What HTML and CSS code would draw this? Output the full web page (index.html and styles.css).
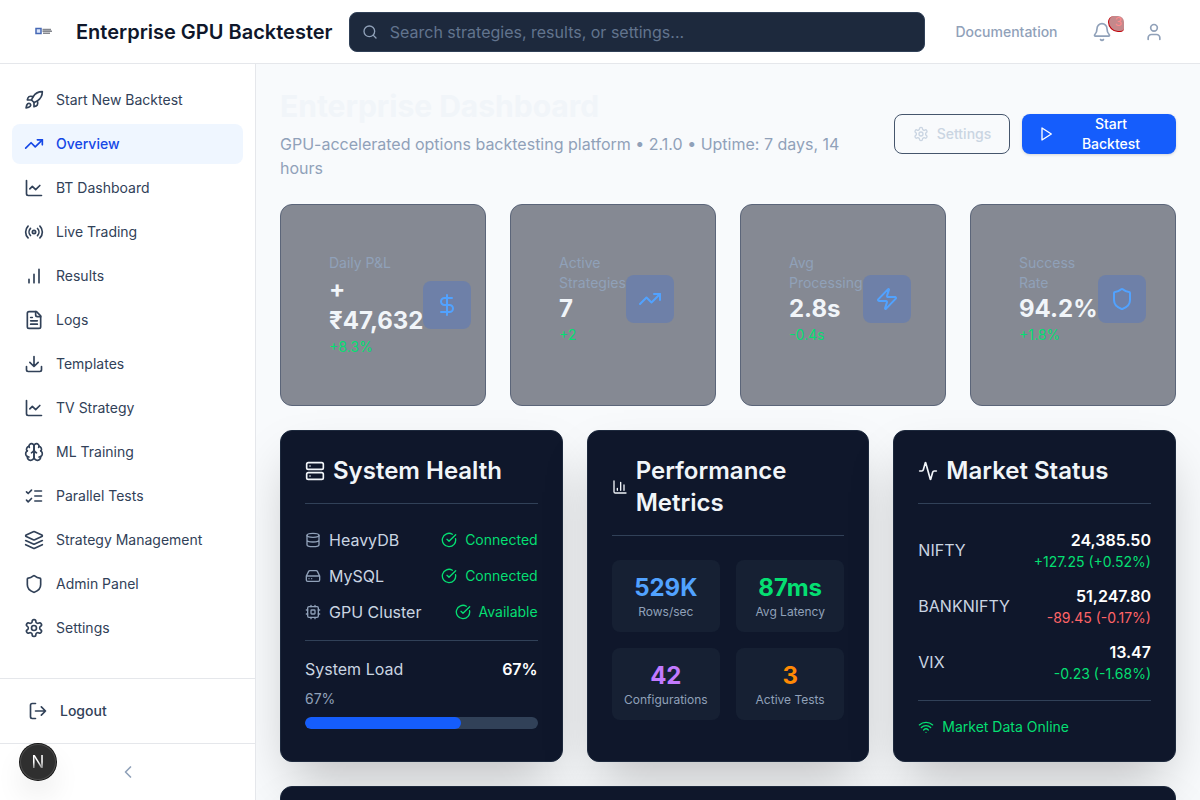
FILE: index.html
```html
<!DOCTYPE html>
<html lang="en">
<head>
<meta charset="utf-8">
<meta name="viewport" content="width=device-width, initial-scale=1">
<title>Enterprise GPU Backtester</title>
<link rel="stylesheet" href="styles.css">
</head>
<body>
<svg class="sprite" aria-hidden="true">
  <symbol id="rocket" viewBox="0 0 24 24"><path d="M4.5 16.5c-1.5 1.26-2 5-2 5s3.74-.5 5-2c.71-.84.7-2.13-.09-2.91a2.18 2.18 0 0 0-2.91-.09z"/><path d="m12 15-3-3a22 22 0 0 1 2-3.95A12.88 12.88 0 0 1 22 2c0 2.72-.78 7.5-6 11a22.35 22.35 0 0 1-4 2z"/><path d="M9 12H4s.55-3.03 2-4c1.62-1.08 5 0 5 0"/><path d="M12 15v5s3.03-.55 4-2c1.08-1.62 0-5 0-5"/></symbol>
  <symbol id="trend" viewBox="0 0 24 24"><path d="M22 7 13.5 15.5 8.5 10.5 2 17"/><path d="M16 7h6v6"/></symbol>
  <symbol id="chart-line" viewBox="0 0 24 24"><path d="M3 3v16a2 2 0 0 0 2 2h16"/><path d="m19 9-5 5-4-4-3 3"/></symbol>
  <symbol id="radio" viewBox="0 0 24 24"><path d="M4.9 19.1C1 15.2 1 8.8 4.9 4.9"/><path d="M7.8 16.2c-2.3-2.3-2.3-6.1 0-8.5"/><circle cx="12" cy="12" r="2"/><path d="M16.2 7.8c2.3 2.3 2.3 6.1 0 8.5"/><path d="M19.1 4.9C23 8.8 23 15.1 19.1 19"/></symbol>
  <symbol id="bars" viewBox="0 0 24 24"><path d="M12 20V10M18 20V4M6 20v-4"/></symbol>
  <symbol id="file" viewBox="0 0 24 24"><path d="M15 2H6a2 2 0 0 0-2 2v16a2 2 0 0 0 2 2h12a2 2 0 0 0 2-2V7Z"/><path d="M14 2v4a2 2 0 0 0 2 2h4M10 9H8M16 13H8M16 17H8"/></symbol>
  <symbol id="download" viewBox="0 0 24 24"><path d="M21 15v4a2 2 0 0 1-2 2H5a2 2 0 0 1-2-2v-4M7 10l5 5 5-5M12 15V3"/></symbol>
  <symbol id="brain" viewBox="0 0 24 24"><path d="M12 5a3 3 0 1 0-5.997.125 4 4 0 0 0-2.526 5.77 4 4 0 0 0 .556 6.588A4 4 0 1 0 12 18Z"/><path d="M12 5a3 3 0 1 1 5.997.125 4 4 0 0 1 2.526 5.77 4 4 0 0 1-.556 6.588A4 4 0 1 1 12 18Z"/><path d="M15 13a4.5 4.5 0 0 1-3-4 4.5 4.5 0 0 1-3 4M17.599 6.5a3 3 0 0 0 .399-1.375M6.003 5.125A3 3 0 0 0 6.401 6.5M3.477 10.896a4 4 0 0 1 .585-.396M19.938 10.5a4 4 0 0 1 .585.396M6 18a4 4 0 0 1-1.967-.516M19.967 17.484A4 4 0 0 1 18 18"/></symbol>
  <symbol id="checks" viewBox="0 0 24 24"><path d="m3 17 2 2 4-4M3 7l2 2 4-4M13 6h8M13 12h8M13 18h8"/></symbol>
  <symbol id="layers" viewBox="0 0 24 24"><path d="m12.83 2.18a2 2 0 0 0-1.66 0L2.6 6.08a1 1 0 0 0 0 1.83l8.58 3.91a2 2 0 0 0 1.66 0l8.58-3.9a1 1 0 0 0 0-1.83Z"/><path d="m22 17.65-9.17 4.16a2 2 0 0 1-1.66 0L2 17.65M22 12.65l-9.17 4.16a2 2 0 0 1-1.66 0L2 12.65"/></symbol>
  <symbol id="shield" viewBox="0 0 24 24"><path d="M20 13c0 5-3.5 7.5-7.66 8.95a1 1 0 0 1-.67-.01C7.5 20.5 4 18 4 13V6a1 1 0 0 1 1-1c2 0 4.5-1.2 6.24-2.72a1.17 1.17 0 0 1 1.52 0C14.51 3.81 17 5 19 5a1 1 0 0 1 1 1z"/></symbol>
  <symbol id="gear" viewBox="0 0 24 24"><path d="M12.22 2h-.44a2 2 0 0 0-2 2v.18a2 2 0 0 1-1 1.73l-.43.25a2 2 0 0 1-2 0l-.15-.08a2 2 0 0 0-2.73.73l-.22.38a2 2 0 0 0 .73 2.73l.15.1a2 2 0 0 1 1 1.72v.51a2 2 0 0 1-1 1.74l-.15.09a2 2 0 0 0-.73 2.73l.22.38a2 2 0 0 0 2.73.73l.15-.08a2 2 0 0 1 2 0l.43.25a2 2 0 0 1 1 1.73V20a2 2 0 0 0 2 2h.44a2 2 0 0 0 2-2v-.18a2 2 0 0 1 1-1.73l.43-.25a2 2 0 0 1 2 0l.15.08a2 2 0 0 0 2.73-.73l.22-.39a2 2 0 0 0-.73-2.73l-.15-.08a2 2 0 0 1-1-1.74v-.5a2 2 0 0 1 1-1.74l.15-.09a2 2 0 0 0 .73-2.73l-.22-.38a2 2 0 0 0-2.73-.73l-.15.08a2 2 0 0 1-2 0l-.43-.25a2 2 0 0 1-1-1.73V4a2 2 0 0 0-2-2z"/><circle cx="12" cy="12" r="3"/></symbol>
  <symbol id="logout" viewBox="0 0 24 24"><path d="M9 21H5a2 2 0 0 1-2-2V5a2 2 0 0 1 2-2h4M16 17l5-5-5-5M21 12H9"/></symbol>
  <symbol id="left" viewBox="0 0 24 24"><path d="m15 18-6-6 6-6"/></symbol>
  <symbol id="search" viewBox="0 0 24 24"><circle cx="11" cy="11" r="8"/><path d="m21 21-4.3-4.3"/></symbol>
  <symbol id="bell" viewBox="0 0 24 24"><path d="M10.268 21a2 2 0 0 0 3.464 0M3.262 15.326A1 1 0 0 0 4 17h16a1 1 0 0 0 .74-1.673C19.41 13.956 18 12.499 18 8A6 6 0 0 0 6 8c0 4.499-1.411 5.956-2.738 7.326"/></symbol>
  <symbol id="user" viewBox="0 0 24 24"><path d="M19 21v-2a4 4 0 0 0-4-4H9a4 4 0 0 0-4 4v2"/><circle cx="12" cy="7" r="4"/></symbol>
  <symbol id="play" viewBox="0 0 24 24"><path d="m6 3 14 9-14 9V3z"/></symbol>
  <symbol id="dollar" viewBox="0 0 24 24"><path d="M12 2v20M17 5H9.500a3.500 3.500 0 0 0 0 7h5a3.500 3.500 0 0 1 0 7H6"/></symbol>
  <symbol id="zap" viewBox="0 0 24 24"><path d="M4 14a1 1 0 0 1-.78-1.63l9.900-10.200a.5.5 0 0 1 .86.46l-1.920 6.020A1 1 0 0 0 13 10h7a1 1 0 0 1 .78 1.630l-9.900 10.200a.5.5 0 0 1-.86-.46l1.920-6.020A1 1 0 0 0 11 14z"/></symbol>
  <symbol id="server" viewBox="0 0 24 24"><rect width="20" height="8" x="2" y="2" rx="2"/><rect width="20" height="8" x="2" y="14" rx="2"/><path d="M6 6h.01M6 18h.01"/></symbol>
  <symbol id="chart-col" viewBox="0 0 24 24"><path d="M3 3v16a2 2 0 0 0 2 2h16M18 17V9M13 17V5M8 17v-3"/></symbol>
  <symbol id="activity" viewBox="0 0 24 24"><path d="M22 12h-2.480a2 2 0 0 0-1.930 1.460l-2.350 8.360a.25.25 0 0 1-.48 0L9.240 2.180a.25.25 0 0 0-.48 0l-2.350 8.360A2 2 0 0 1 4.490 12H2"/></symbol>
  <symbol id="database" viewBox="0 0 24 24"><ellipse cx="12" cy="5" rx="9" ry="3"/><path d="M3 5v14a9 3 0 0 0 18 0V5M3 12a9 3 0 0 0 18 0"/></symbol>
  <symbol id="drive" viewBox="0 0 24 24"><path d="M22 12H2M5.450 5.110 2 12v6a2 2 0 0 0 2 2h16a2 2 0 0 0 2-2v-6l-3.450-6.890A2 2 0 0 0 16.760 4H7.240a2 2 0 0 0-1.790 1.110zM6 16h.01M10 16h.01"/></symbol>
  <symbol id="cpu" viewBox="0 0 24 24"><rect width="16" height="16" x="4" y="4" rx="2"/><rect width="6" height="6" x="9" y="9" rx="1"/><path d="M15 2v2M15 20v2M2 15h2M2 9h2M20 15h2M20 9h2M9 2v2M9 20v2"/></symbol>
  <symbol id="ok" viewBox="0 0 24 24"><path d="M21.801 10A10 10 0 1 1 17 3.335M9 11l3 3L22 4"/></symbol>
  <symbol id="wifi" viewBox="0 0 24 24"><path d="M12 20h.01M2 8.820a15 15 0 0 1 20 0M5 12.859a10 10 0 0 1 14 0M8.500 16.429a5 5 0 0 1 7 0"/></symbol>
</svg>

<header class="topbar">
  <div class="brand">
    <svg class="logo" viewBox="0 0 40 32" aria-hidden="true"><rect x="12" y="12.500" width="5" height="5" fill="#dce6fa" stroke="#4668b5" stroke-width="1.500"/><path d="M18.500 13.500h8.500M18.500 15.300h9.500M19 17.200h7" fill="none" stroke="#85888f" stroke-width="1.500"/></svg>
    <span class="brand-name">Enterprise GPU Backtester</span>
  </div>
  <label class="search">
    <svg class="icon s16"><use href="#search"/></svg>
    <input type="search" placeholder="Search strategies, results, or settings..." aria-label="Search">
  </label>
  <div class="tools">
    <a class="docs" href="#">Documentation</a>
    <button class="tool" type="button" aria-label="Notifications"><svg class="icon s20"><use href="#bell"/></svg><span class="badge">3</span></button>
    <button class="tool" type="button" aria-label="Account"><svg class="icon s20"><use href="#user"/></svg></button>
  </div>
</header>

<div class="shell">
  <aside class="sidebar">
    <nav class="nav">
      <a href="#"><svg class="icon s20"><use href="#rocket"/></svg>Start New Backtest</a>
      <a href="#" class="active" aria-current="page"><svg class="icon s20"><use href="#trend"/></svg>Overview</a>
      <a href="#"><svg class="icon s20"><use href="#chart-line"/></svg>BT Dashboard</a>
      <a href="#"><svg class="icon s20"><use href="#radio"/></svg>Live Trading</a>
      <a href="#"><svg class="icon s20"><use href="#bars"/></svg>Results</a>
      <a href="#"><svg class="icon s20"><use href="#file"/></svg>Logs</a>
      <a href="#"><svg class="icon s20"><use href="#download"/></svg>Templates</a>
      <a href="#"><svg class="icon s20"><use href="#chart-line"/></svg>TV Strategy</a>
      <a href="#"><svg class="icon s20"><use href="#brain"/></svg>ML Training</a>
      <a href="#"><svg class="icon s20"><use href="#checks"/></svg>Parallel Tests</a>
      <a href="#"><svg class="icon s20"><use href="#layers"/></svg>Strategy Management</a>
      <a href="#"><svg class="icon s20"><use href="#shield"/></svg>Admin Panel</a>
      <a href="#"><svg class="icon s20"><use href="#gear"/></svg>Settings</a>
    </nav>
    <div class="side-foot"><button class="logout" type="button"><svg class="icon s20"><use href="#logout"/></svg>Logout</button></div>
    <div class="side-foot"><button class="collapse" type="button" aria-label="Collapse sidebar"><svg class="icon s20"><use href="#left"/></svg></button></div>
  </aside>

  <main class="main">
    <section class="page-head">
      <div>
        <h1>Enterprise Dashboard</h1>
        <p>GPU-accelerated options backtesting platform • 2.1.0 • Uptime: 7 days, 14 hours</p>
      </div>
      <div class="actions">
        <button class="btn outline" type="button"><svg class="icon s16"><use href="#gear"/></svg>Settings</button>
        <button class="btn primary" type="button"><svg class="icon s16"><use href="#play"/></svg><span>Start<br>Backtest</span></button>
      </div>
    </section>

    <section class="stats">
      <article class="stat"><div class="stat-row"><div><p class="stat-label">Daily P&amp;L</p><p class="stat-value">+<wbr>₹47,632</p><p class="stat-change">+8.3%</p></div><span class="stat-icon"><svg class="icon s24"><use href="#dollar"/></svg></span></div></article>
      <article class="stat"><div class="stat-row"><div><p class="stat-label">Active Strategies</p><p class="stat-value">7</p><p class="stat-change">+2</p></div><span class="stat-icon"><svg class="icon s24"><use href="#trend"/></svg></span></div></article>
      <article class="stat"><div class="stat-row"><div><p class="stat-label">Avg Processing</p><p class="stat-value">2.8s</p><p class="stat-change">-0.4s</p></div><span class="stat-icon"><svg class="icon s24"><use href="#zap"/></svg></span></div></article>
      <article class="stat"><div class="stat-row"><div><p class="stat-label">Success Rate</p><p class="stat-value">94.2%</p><p class="stat-change">+1.8%</p></div><span class="stat-icon"><svg class="icon s24"><use href="#shield"/></svg></span></div></article>
    </section>

    <section class="panels">
      <article class="card">
        <h2><svg class="icon s20"><use href="#server"/></svg>System Health</h2>
        <div class="rows">
          <div class="row"><span class="name"><svg class="icon s16"><use href="#database"/></svg>HeavyDB</span><span class="state"><svg class="icon s16"><use href="#ok"/></svg>Connected</span></div>
          <div class="row"><span class="name"><svg class="icon s16"><use href="#drive"/></svg>MySQL</span><span class="state"><svg class="icon s16"><use href="#ok"/></svg>Connected</span></div>
          <div class="row"><span class="name"><svg class="icon s16"><use href="#cpu"/></svg>GPU Cluster</span><span class="state"><svg class="icon s16"><use href="#ok"/></svg>Available</span></div>
        </div>
        <div class="card-foot">
          <div class="row"><span class="name">System Load</span><strong>67%</strong></div>
          <div class="load"><span>67%</span><div class="track"><div class="fill" style="width:67%"></div></div></div>
        </div>
      </article>

      <article class="card">
        <h2><svg class="icon s16"><use href="#chart-col"/></svg>Performance Metrics</h2>
        <div class="tiles">
          <div class="tile blue"><b>529K</b><span>Rows/sec</span></div>
          <div class="tile green"><b>87ms</b><span>Avg Latency</span></div>
          <div class="tile purple"><b>42</b><span>Configurations</span></div>
          <div class="tile orange"><b>3</b><span>Active Tests</span></div>
        </div>
      </article>

      <article class="card">
        <h2><svg class="icon s20"><use href="#activity"/></svg>Market Status</h2>
        <div class="rows">
          <div class="row"><span class="name">NIFTY</span><div class="quote"><strong>24,385.50</strong><span class="up">+127.25 (+0.52%)</span></div></div>
          <div class="row"><span class="name">BANKNIFTY</span><div class="quote"><strong>51,247.80</strong><span class="down">-89.45 (-0.17%)</span></div></div>
          <div class="row"><span class="name">VIX</span><div class="quote"><strong>13.47</strong><span class="up">-0.23 (-1.68%)</span></div></div>
        </div>
        <div class="card-foot"><span class="state"><svg class="icon s16"><use href="#wifi"/></svg>Market Data Online</span></div>
      </article>
    </section>

    <section class="card next"></section>
  </main>
</div>
<button class="dev" type="button" aria-label="Developer tools"><span>N</span></button>
</body>
</html>
```
FILE: styles.css
```css
* { box-sizing: border-box; }
body, h1, h2, p { margin: 0; }
body {
  height: 100vh;
  display: flex;
  flex-direction: column;
  overflow: hidden;
  background: #f8fafc;
  color: #f1f5f9;
  font: 16px/24px Inter, "Noto Sans", sans-serif;
}
a { color: inherit; text-decoration: none; }
button, input { font: inherit; color: inherit; border: 0; background: none; padding: 0; }
.sprite { position: absolute; width: 0; height: 0; }
.icon { flex: none; fill: none; stroke: currentColor; stroke-width: 2; stroke-linecap: round; stroke-linejoin: round; }
.s16 { width: 16px; height: 16px; }
.s20 { width: 20px; height: 20px; }
.s24 { width: 24px; height: 24px; }

.topbar {
  flex: none;
  height: 64px;
  padding: 0 24px;
  display: flex;
  align-items: center;
  justify-content: space-between;
  gap: 16px;
  background: #fff;
  border-bottom: 1px solid #e5e7eb;
}
.brand { display: flex; align-items: center; gap: 12px; white-space: nowrap; }
.logo { width: 40px; height: 32px; }
.brand-name { color: #0f172b; font-size: 20px; line-height: 28px; font-weight: 600; }
.search {
  flex: 1;
  max-width: 576px;
  height: 40px;
  padding: 0 12px;
  display: flex;
  align-items: center;
  gap: 12px;
  background: #1d293d;
  border: 1px solid #314158;
  border-radius: 8px;
  color: #90a1b9;
}
.search input { flex: 1; min-width: 0; outline: 0; }
.search input::placeholder { color: #62748e; opacity: 1; }
.tools { display: flex; align-items: center; gap: 8px; color: #90a1b9; }
.docs { min-width: 131px; text-align: center; font-size: 14px; font-weight: 500; }
.tool {
  position: relative;
  width: 44px;
  height: 32px;
  display: flex;
  align-items: center;
  justify-content: center;
  border-radius: 6px;
}
.badge {
  position: absolute;
  top: 0;
  right: 0;
  width: 16px;
  height: 16px;
  padding-left: 4px;
  border: solid #c10007;
  border-width: 0 0 1px 1px;
  border-radius: 6px 6px 4px 10px;
  background: #c5888b;
  color: #ff8a8c;
  font-size: 12px;
  line-height: 12px;
}

.shell { flex: 1; min-height: 0; display: flex; }
.sidebar {
  flex: none;
  width: 256px;
  display: flex;
  flex-direction: column;
  background: #fff;
  border-right: 1px solid #e5e7eb;
  color: #314158;
  font-size: 14px;
  line-height: 20px;
}
.nav { flex: 1; padding: 16px 12px; display: flex; flex-direction: column; gap: 4px; }
.nav a { display: flex; align-items: center; gap: 12px; padding: 10px 12px; border-radius: 8px; }
.nav .active { background: #eff6ff; color: #1447e6; font-weight: 500; }
.side-foot { padding: 12px; border-top: 1px solid #e5e7eb; }
.logout { width: 100%; height: 40px; padding: 0 16px; display: flex; align-items: center; gap: 12px; font-weight: 500; }
.collapse { width: 100%; height: 32px; display: flex; align-items: center; justify-content: center; color: #90a1b9; }

.main { flex: 1; min-width: 0; overflow: hidden; padding: 24px; display: flex; flex-direction: column; gap: 24px; }
.main > * { flex: none; }
.page-head { display: flex; align-items: center; justify-content: space-between; gap: 24px; }
h1 { margin-bottom: 8px; font-size: 30px; line-height: 36px; font-weight: 700; }
.page-head p { color: #90a1b9; }
.actions { flex: none; display: flex; gap: 12px; }
.btn {
  height: 40px;
  padding: 0 16px;
  display: flex;
  align-items: center;
  justify-content: center;
  gap: 8px;
  border-radius: 8px;
  font-size: 14px;
  line-height: 20px;
  font-weight: 500;
}
.outline { min-width: 116px; border: 1px solid #45556c; color: #cad5e2; }
.primary { width: 154px; background: #155dfc; color: #fff; box-shadow: 0 1px 3px rgba(0, 0, 0, 0.15); }
.primary span { flex: 1; }

.stats { display: grid; grid-template-columns: repeat(4, minmax(0, 1fr)); gap: 24px; }
.stat { padding: 48px; background: #858993; border: 1px solid #5b6579; border-radius: 12px; }
.stat-row { display: flex; align-items: center; justify-content: space-between; }
.stat-label { color: #90a1b9; font-size: 14px; line-height: 20px; }
.stat-value { font-size: 24px; line-height: 32px; font-weight: 700; }
.stat-change { color: #05df72; font-size: 14px; line-height: 20px; }
.stat-icon { flex: none; display: flex; padding: 12px; border-radius: 8px; background: #6e80a8; color: #51a2ff; }

.panels { display: grid; grid-template-columns: repeat(3, minmax(0, 1fr)); gap: 24px; }
.card {
  padding: 24px;
  background: #0f172b;
  border: 1px solid #1d293d;
  border-radius: 12px;
  box-shadow: 0 25px 50px -12px rgba(0, 0, 0, 0.25);
}
.card h2 {
  display: flex;
  align-items: center;
  gap: 8px;
  padding-bottom: 16px;
  margin-bottom: 24px;
  border-bottom: 1px solid #314158;
  font-size: 24px;
  line-height: 32px;
  font-weight: 600;
}
.rows { display: flex; flex-direction: column; gap: 12px; }
.row { display: flex; align-items: center; justify-content: space-between; }
.row strong { color: #fff; font-weight: 600; }
.name, .state { display: flex; align-items: center; gap: 8px; }
.name { color: #cad5e2; }
.name .icon { color: #90a1b9; }
.state { color: #05df72; font-size: 14px; line-height: 20px; }
.card-foot { margin-top: 16px; padding-top: 16px; border-top: 1px solid #314158; }
.load { margin-top: 8px; display: flex; flex-direction: column; gap: 8px; color: #90a1b9; font-size: 14px; line-height: 20px; }
.track { height: 12px; overflow: hidden; border-radius: 6px; background: #314158; }
.fill { height: 100%; border-radius: 6px; background: #155dfc; }
.tiles { display: grid; grid-template-columns: repeat(2, minmax(0, 1fr)); gap: 16px; }
.tile { padding: 12px; display: flex; flex-direction: column; align-items: center; border-radius: 8px; background: #162033; }
.tile b { font-size: 24px; line-height: 32px; font-weight: 700; }
.tile span { color: #90a1b9; font-size: 12px; line-height: 16px; }
.blue { color: #51a2ff; }
.green { color: #05df72; }
.purple { color: #c27aff; }
.orange { color: #ff8904; }
.quote { display: flex; flex-direction: column; align-items: flex-end; }
.quote span { font-size: 14px; line-height: 20px; }
.up { color: #05df72; }
.down { color: #ff6467; }
.next { min-height: 200px; }

.dev {
  position: fixed;
  left: 20px;
  bottom: 20px;
  width: 36px;
  height: 36px;
  border-radius: 50%;
  background: #2f2f2f;
  box-shadow: 0 0 0 1px #111, inset 0 0 0 1px #4a4a4a, 0 16px 32px -8px rgba(0, 0, 0, 0.24);
  font-size: 17px;
  line-height: 36px;
  text-align: center;
}
.dev span { background: linear-gradient(to bottom, #fff 50%, #8a8a8a 80%); background-clip: text; color: transparent; }
```
